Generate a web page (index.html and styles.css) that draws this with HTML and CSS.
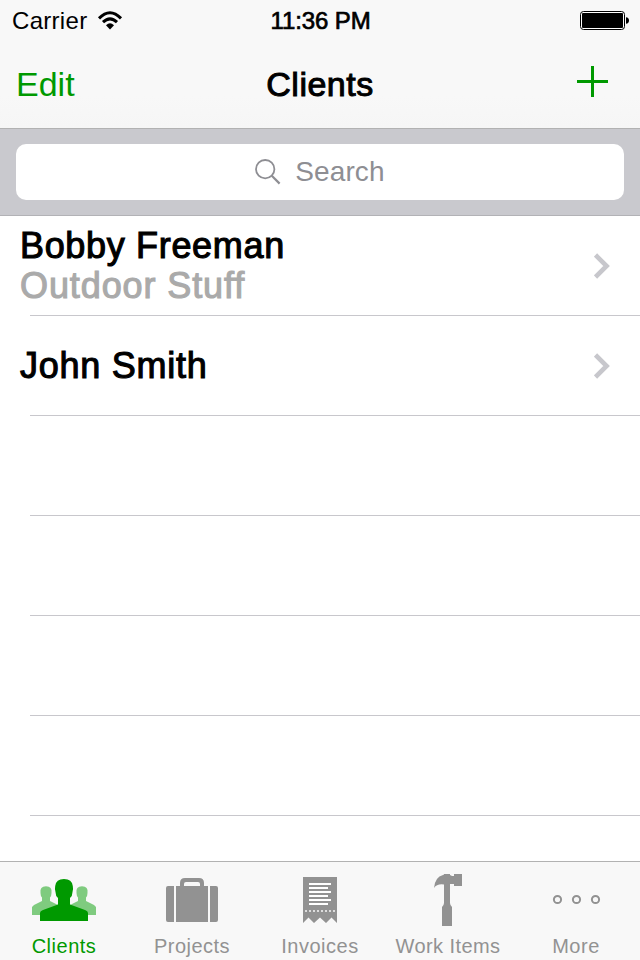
FILE: index.html
```html
<!DOCTYPE html>
<html lang="en">
<head>
<meta charset="utf-8">
<title>Clients</title>
<link rel="stylesheet" href="styles.css">
</head>
<body>
<div class="app">
  <header class="header">
    <div class="status">
      <div class="carrier"><span>Carrier</span>
        <svg class="wifi" width="26" height="20" viewBox="0 0 26 20"><path d="M2 7.4Q13-3.8 24 7.4" fill="none" stroke="#000" stroke-width="3"/><path d="M6 11.2Q13 4.4 20 11.2" fill="none" stroke="#000" stroke-width="3"/><path d="M9 14.2Q13 10.5 17 14.2L13 18.5Z"/></svg>
      </div>
      <div class="time">11:36 PM</div>
      <svg class="battery" width="50" height="20" viewBox="0 0 50 20"><rect x=".5" y=".5" width="44" height="18" rx="3" fill="#fff" stroke="#000"/><rect x="2" y="2" width="41" height="15" rx="1"/><path d="M46 6.2Q49 6.6 49 9.5T46 12.8Z"/></svg>
    </div>
    <nav class="nav">
      <a class="edit">Edit</a>
      <h1 class="title">Clients</h1>
      <svg class="add" width="31" height="31" viewBox="0 0 31 31"><path d="M14 0h3v14h14v3H17v14h-3V17H0v-3h14z" fill="#090"/></svg>
    </nav>
  </header>
  <div class="search">
    <div class="field">
      <svg width="26" height="26" viewBox="0 0 26 26" fill="none" stroke="#8e8e93" stroke-width="1.8"><circle cx="10.2" cy="10.2" r="9.2"/><path d="M16.8 16.8L24.6 24.6" stroke-width="2.2"/></svg>
      <span>Search</span>
    </div>
  </div>
  <main class="list">
    <div class="row">
      <div class="names"><div class="name bobby">Bobby Freeman</div><div class="company">Outdoor Stuff</div></div>
      <svg class="chevron" width="16" height="26" viewBox="0 0 16 26"><path d="M1.5 2L12.6 13L1.5 24" fill="none" stroke="#c7c7cc" stroke-width="4.6"/></svg>
    </div>
    <div class="row">
      <div class="names"><div class="name john">John Smith</div></div>
      <svg class="chevron" width="16" height="26" viewBox="0 0 16 26"><path d="M1.5 2L12.6 13L1.5 24" fill="none" stroke="#c7c7cc" stroke-width="4.6"/></svg>
    </div>
    <div class="row"></div>
    <div class="row"></div>
    <div class="row"></div>
    <div class="row"></div>
  </main>
  <footer class="tabs">
    <div class="tab active">
      <svg width="64" height="56" viewBox="0 0 64 56">
        <g fill="#7fcb7f"><path d="M0 40V32L2 30L10 26V22.500Q8.500 21 8.500 18Q7.500 11.500 14 11.300Q20.500 11.500 19.500 18Q19.500 21 18 22.500V26L26 30V40Z"/><path d="M64 40V32L62 30L54 26V22.500Q55.500 21 55.500 18Q56.500 11.500 50 11.300Q43.500 11.500 44.500 18Q44.500 21 46 22.500V26L38 30V40Z"/></g>
        <path d="M8 46V38Q8 36 11 35L26 29.500V23Q23.500 21 23.500 17Q22.500 14.500 23.200 11Q24 4 32 4T40.800 11Q41.500 14.500 40.500 17Q40.500 21 38 23V29.500L53 35Q56 36 56 38V46Z" fill="#090"/>
      </svg>
      <span>Clients</span>
    </div>
    <div class="tab">
      <svg width="64" height="56" viewBox="0 0 64 56" fill="#929292"><path d="M8 11H14V47H8Q6 47 6 45V13Q6 11 8 11ZM16 11H20V8Q20 3 25 3H39Q44 3 44 8V11H48V47H16ZM24 11H40V9Q40 7 38 7H26Q24 7 24 9ZM50 11H56Q58 11 58 13V45Q58 47 56 47H50Z" fill-rule="evenodd"/></svg>
      <span>Projects</span>
    </div>
    <div class="tab">
      <svg width="64" height="56" viewBox="0 0 64 56"><path d="M15 2H49V48L43.500 42.500L38 48L32 42.500L26 48L20.500 42.500L15 48Z" fill="#929292"/><path d="M21 9H43M21 13H40M21 17H43M21 21H40M21 25H43M21 29H40" stroke="#fff" stroke-width="2"/><path d="M17 36H48" stroke="#ddd" stroke-width="2" stroke-dasharray="2 2"/></svg>
      <span>Invoices</span>
    </div>
    <div class="tab">
      <svg class="hammer" width="64" height="56" viewBox="0 0 64 56" fill="#929292"><path d="M18 13Q19 2 27 0L28 -.5V-1H34V0L36 1H38V-1H46V11H38V9H34V28Q34 30 36 32V51H26V32Q28 30 28 28V9.500Q21 8.500 18 13Z"/></svg>
      <span class="work">Work Items</span>
    </div>
    <div class="tab">
      <svg width="64" height="56" viewBox="0 0 64 56" fill="none" stroke="#929292" stroke-width="2"><circle cx="13.500" cy="24.500" r="3.600"/><circle cx="32.500" cy="24.500" r="3.600"/><circle cx="51.500" cy="24.500" r="3.600"/></svg>
      <span>More</span>
    </div>
  </footer>
</div>
</body>
</html>
```
FILE: styles.css
```css
* { box-sizing: border-box; }
body { margin: 0; font-family: "Liberation Sans", Arial, sans-serif; color: #000; background: #fff; }
svg { display: block; flex: none; }
.app { width: 640px; height: 960px; display: flex; flex-direction: column; overflow: hidden; }
.header { height: 129px; flex: none; background: linear-gradient(#f8f8f8 75%, #f6f6f6); border-bottom: 1px solid #b2b2b2; }
.status { height: 40px; padding: 1px 11px 0 12px; display: grid; grid-template-columns: 1fr auto 1fr; align-items: center; font-size: 24px; line-height: 40px; }
.carrier { display: flex; align-items: center; gap: 10px; letter-spacing: .3px; }
.time { letter-spacing: -.1px; -webkit-text-stroke: .7px #000; }
.battery { justify-self: end; margin-right: -1px; }
.nav { height: 88px; padding: 0 32px 0 16px; display: grid; grid-template-columns: 1fr auto 1fr; align-items: center; font-size: 34px; line-height: 88px; }
.edit { color: #090; }
.title { margin: 0 -16px 0 0; font-size: 34px; font-weight: 400; letter-spacing: .5px; -webkit-text-stroke: 1px #000; }
.add { justify-self: end; margin-top: -5px; }
.search { height: 87px; flex: none; padding: 15px 16px; background: #c9c9ce; border-bottom: 1px solid #b2b2b6; }
.field { height: 56px; border-radius: 10px; background: #fff; display: flex; align-items: center; justify-content: center; gap: 14px; font-size: 28px; line-height: 56px; color: #8e8e93; letter-spacing: .1px; }
.list { flex: 1; min-height: 0; overflow: hidden; }
.row { height: 100px; margin-left: 30px; padding-right: 30px; border-bottom: 1px solid #c8c7cc; display: flex; align-items: center; justify-content: space-between; }
.names { margin-left: -10px; padding-top: 1px; font-size: 36px; line-height: 40px; }
.name { -webkit-text-stroke: 1.1px #000; }
.bobby { letter-spacing: .67px; }
.john { letter-spacing: .75px; }
.company { color: #aaa; letter-spacing: .9px; -webkit-text-stroke: 1.1px #aaa; }
.chevron { margin-top: 1px; }
.tabs { height: 99px; flex: none; border-top: 1px solid #b2b2b2; background: #f8f8f8; display: grid; grid-template-columns: repeat(5, 1fr); }
.tab { display: flex; flex-direction: column; align-items: center; padding-top: 13px; font-size: 20px; color: #929292; letter-spacing: .5px; white-space: nowrap; }
.tab span { line-height: 24px; margin-top: 3px; }
.tab .work { letter-spacing: .4px; }
.hammer { overflow: visible; }
.active { color: #090; }
```
